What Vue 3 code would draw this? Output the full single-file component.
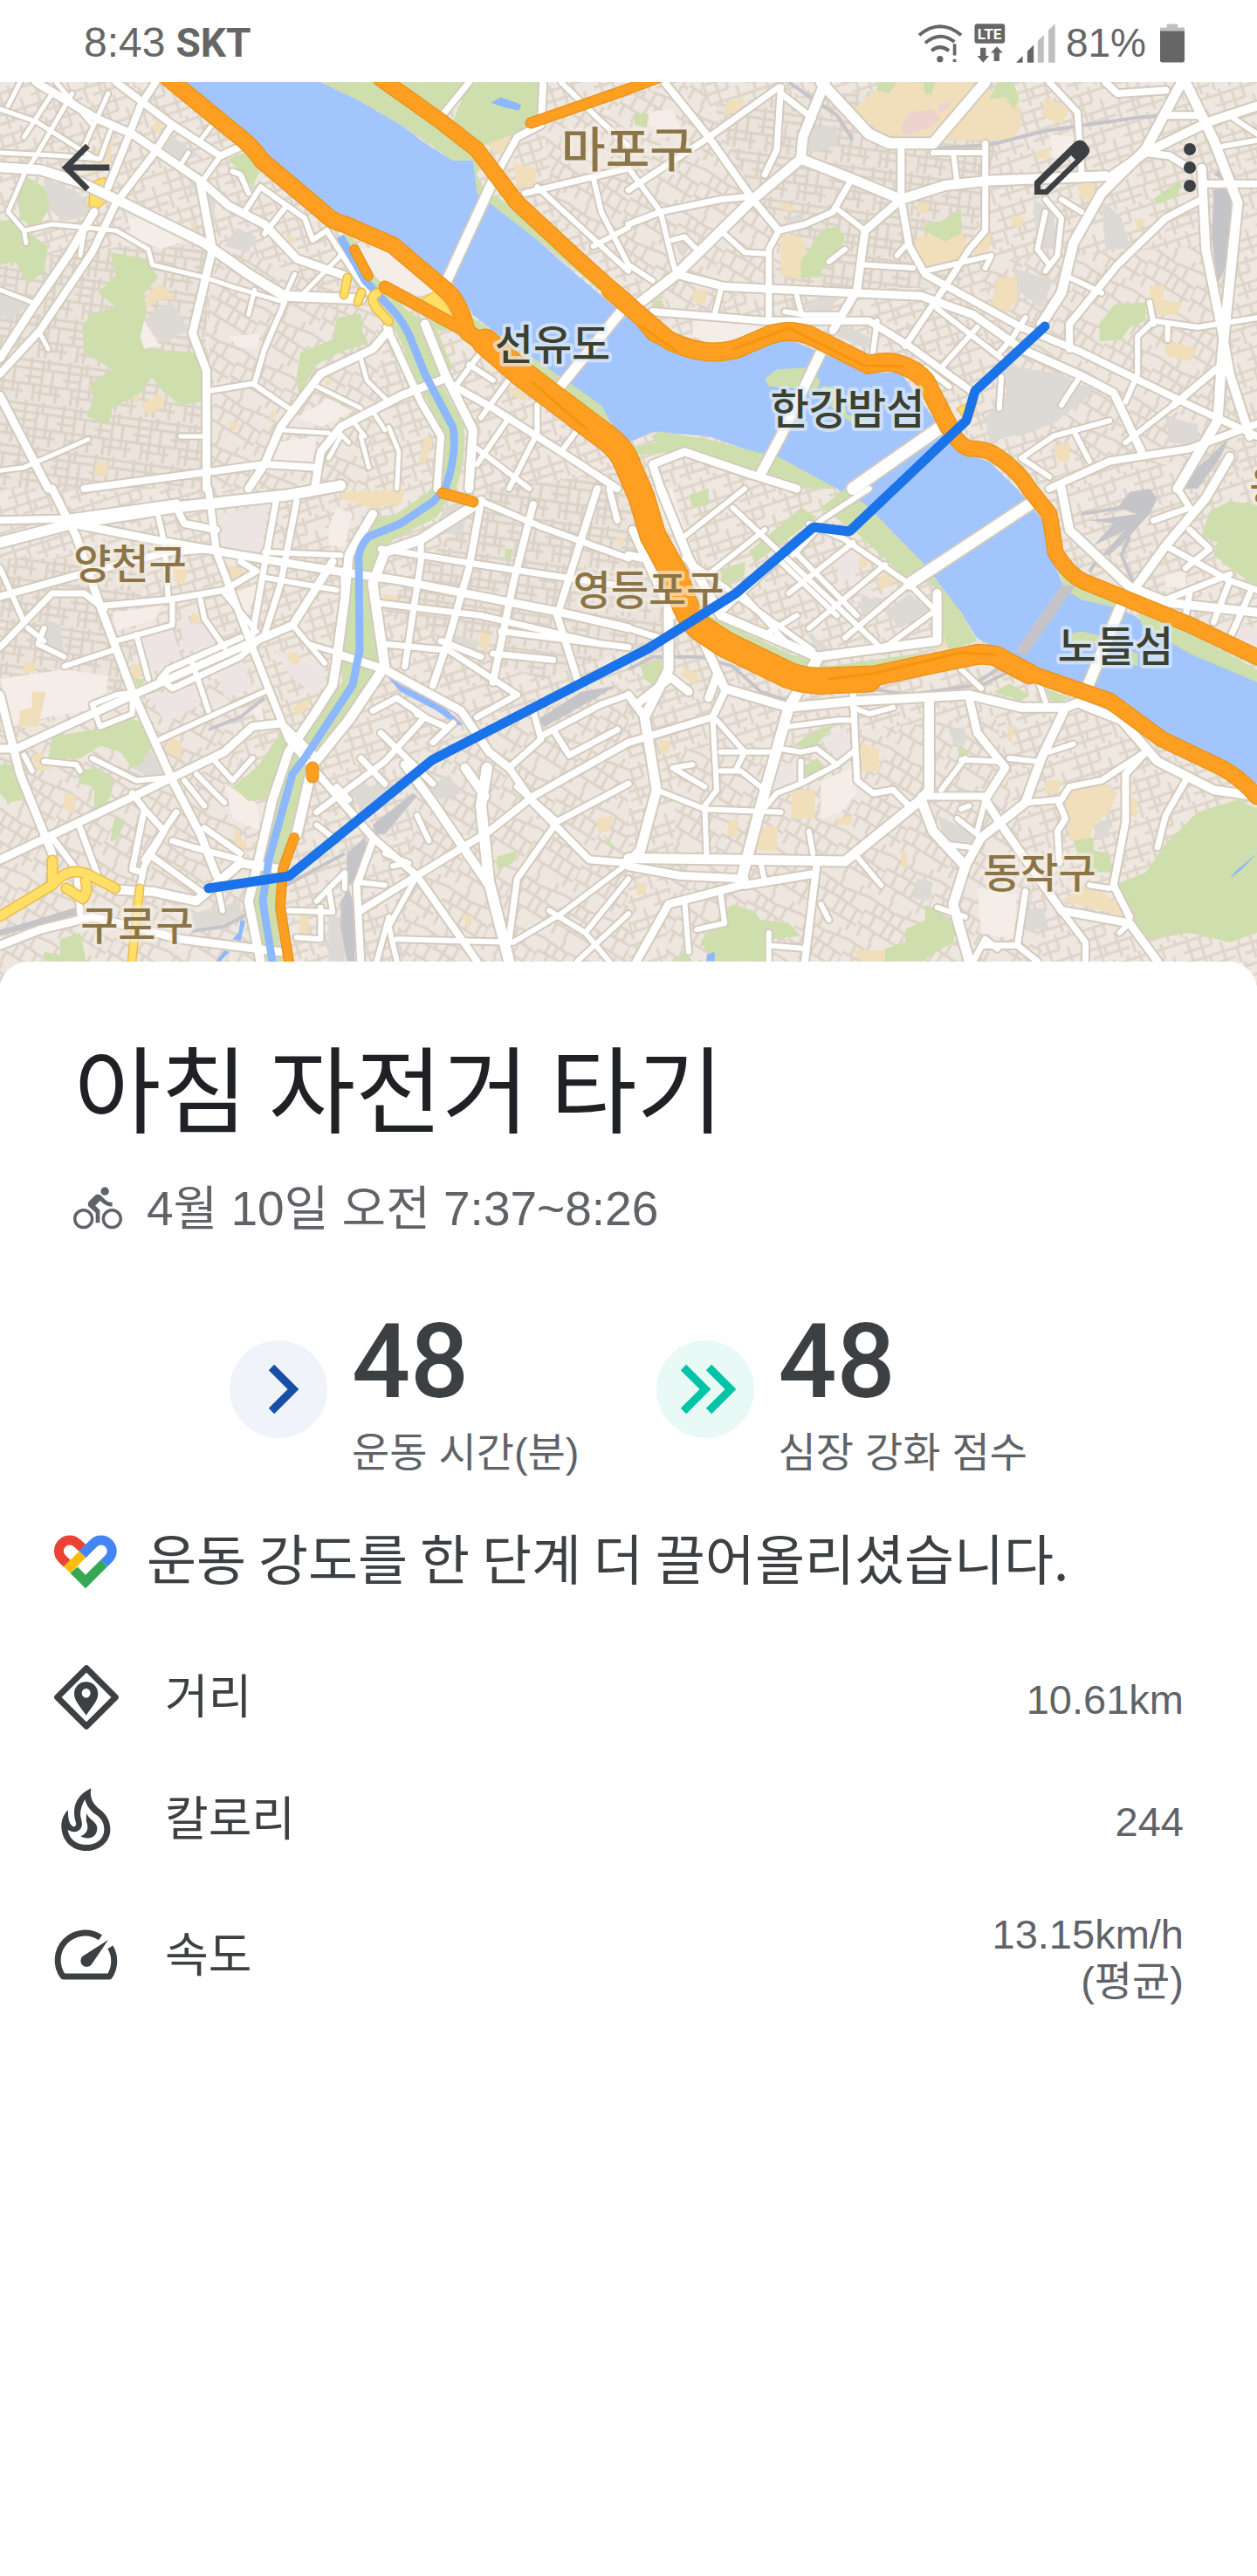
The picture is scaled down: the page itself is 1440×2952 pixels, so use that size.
<script setup>
// Each tile keeps its own 1568-unit grid; road entries are [width in px, path].
const tiles = [
  {
    id: 'nw',
    transform: 'translate(0 0) scale(0.4592 0.3571)',
    grey: [
      'M110 570L200 620L230 690L160 710L110 660Z', 'M0 930L70 980L20 1030L0 1010Z', 'M370 1010L430 970L470 1060L410 1100L360 1060Z',
      'M590 730L640 760L620 810L560 790Z', 'M400 410L500 500L450 520L390 470Z', 'M460 560L540 640L530 720L500 650Z', 'M1370 800L1430 850L1400 900L1350 850Z',
    ],
    sand: [
      'M290 880L340 900L320 940L280 920Z', 'M370 940L400 910L440 960L400 960L360 990Z', 'M240 480L285 440L270 540L220 560Z', 'M710 740L740 770L720 780Z',
      'M470 705L495 720L480 735Z', 'M390 380L410 395L395 430L380 410Z', 'M325 1260L350 1270L340 1300Z', 'M350 1300L400 1260L410 1300L370 1330Z', 'M570 1350L600 1360L580 1390Z',
      'M240 1480L270 1490L265 1530L235 1520Z', 'M1060 1400L1080 1410L1060 1490L1045 1480Z', 'M1270 1240L1320 1260L1310 1290L1270 1260Z', 'M1280 520L1335 540L1340 600L1290 600Z',
      'M810 1215L830 1225L815 1240Z', 'M680 1310L690 1330L670 1360Z', 'M1210 460L1310 400L1290 440L1260 520L1280 600L1240 580L1250 500Z', 'M1040 370L1060 420L1100 440L1050 430L1030 390Z',
    ],
    pale: ['M320 700L460 720L470 770L400 800L330 760Z', 'M350 1010L400 1110L350 1120Z', 'M570 1080L650 1070L640 1120L590 1110Z', 'M880 800L980 790L1100 930L1050 950L940 900Z', 'M740 1340L820 1280L880 1320L800 1370Z', 'M690 1420L790 1400L780 1480L680 1480Z'],
    green: [
      'M70 570L110 600L125 660L90 740L50 700L45 630Z', 'M0 710L50 700L60 740L120 790L110 870L70 910L40 840L0 850Z',
      'M275 810L360 830L395 890L360 940L365 1000L350 1080L360 1120L480 1130L505 1180L500 1290L450 1300L410 1260L380 1210L350 1260L280 1310L270 1365L215 1335L235 1280L225 1230L280 1185L210 1130L205 1050L225 1010L290 985L245 940L290 880Z',
      'M570 510L610 490L650 540L630 600L610 570Z', 'M840 1020L900 1005L905 1070L920 1100L850 1130L790 1170L745 1270L740 1210L750 1130L830 1090Z',
      'M800 264L950 264L1110 380L1210 470L1190 560L1210 610L1250 640L1440 830L1568 970L1568 1010L1420 850L1190 620L1180 515L1130 515L1000 400L900 325Z',
      'M1170 264L1350 264L1350 400L1260 440L1200 470L1130 390Z', 'M960 264L1160 264L1100 370Z', 'M940 940L1060 1030L1180 1020L1310 1130L1500 1300L1530 1370L1480 1350L1150 1060L1090 1060L1130 1180L1100 1220L1020 1080Z',
      'M830 1410L845 1430L830 1450Z',
    ],
    water: ['M1225 330L1250 312L1300 335L1295 355L1260 345Z', 'M840 750L880 790L870 800Z'],
    yellow: ['M225 585L260 570L280 610L270 640L240 675L222 660Z', 'M1050 960L1085 935L1110 970L1140 1035Z'],
    roads: [
      [12, 'M-20 535L100 545L200 585L290 640L510 780L620 880L710 950L900 960'], [9, 'M388 264L350 340L320 440L270 600'], [10, 'M90 264L240 380L330 430L500 580L570 660L660 720L740 830L860 885'],
      [9, 'M290 264L430 400L550 500L610 465'], [9, 'M430 400L380 500L290 650L230 810L100 1060L0 1200'], [10, 'M235 680L170 820L80 990L0 1150'], [6, 'M0 490L150 500L250 510L275 420'],
      [6, 'M0 350L90 390L200 480L240 510'], [6, 'M180 300L90 500L60 560L20 680L60 740L130 720L290 740L370 800L380 850L510 890L580 920L710 970'],
      [10, 'M500 590L530 800L480 1070L515 1190L515 1568'], [7, 'M710 970L660 1120L635 1230L520 1255M635 1235L720 1310'], [10, 'M970 1060L930 1120L800 1200L700 1370L660 1490L620 1568'],
      [10, 'M0 1270L120 1568'], [6, 'M0 1510L60 1500L220 1410M60 740L65 780M210 740L200 820'], [9, 'M210 1568L430 1530L660 1490L790 1500'], [9, 'M965 1050L1050 1290L1100 1400L1090 1568'],
      [11, 'M1060 1040L1110 1200L1180 1380L1170 1568'], [10, 'M1110 1215L1000 1270L850 1370L800 1450L785 1568'], [9, 'M1120 1230L1230 1310L1400 1450L1540 1568'],
      [7, 'M1200 1130L1130 1250M1280 1200L1200 1340M1170 1170L1230 1220M1270 1340L1190 1490M1190 1440L1320 1568M1400 1450L1440 1380M1340 1300L1340 1390L1270 1568'],
      [12, 'M1230 580L1115 900M1568 970L1385 1260'], [8, 'M1170 264L1110 360'], [9, 'M1230 580L1290 440L1350 400L1355 264'], [8, 'M1310 620L1568 540'],
      [7, 'M1340 600L1568 870M1480 570L1500 680L1568 850M1480 790L1568 730M1400 264L1500 390L1568 470'], [6, 'M790 1240L900 1310M900 1150L915 1220L970 1290M820 1470L850 1400M970 1370L995 1450L990 1568M900 1400L920 1500M700 1380L820 1390M840 1380L870 1420M880 1350L910 1400M930 1320L960 1380'],
      [7, 'M815 740L880 870L920 940'], [7, 'M610 680L650 600L760 700L780 770L815 740M715 660L660 750M620 620L600 560L580 550M550 500L500 590'], [6, 'M635 930L620 1010M735 880L710 950M850 820L750 950M0 930L80 970M100 1070L120 1120M450 1400L515 1400M530 400L500 450M450 530L470 490M140 264L230 400M20 340L50 264M130 300L60 440M270 300L210 470'],
    ],
  },
  {
    id: 'ne',
    transform: 'translate(720 0) scale(0.4592 0.3571)',
    grey: [
      'M1010 640L1060 680L1070 800L1020 800Z', 'M1180 640L1230 700L1250 800L1190 800Z', 'M110 770L150 800L130 820Z', 'M360 740L430 680L440 720Z', 'M960 860L1060 900L1030 990L970 930Z',
      'M930 1170L1080 1200L1160 1260L1060 1360L900 1420L890 1340L950 1260Z', 'M1340 1340L1420 1360L1420 1430L1350 1420Z', 'M480 950L520 960L500 1000L430 990Z', 'M530 1040L600 1080L600 1120L520 1080Z', 'M430 420L520 400L520 470L440 490Z',
    ],
    sand: [
      'M560 350L640 264L860 264L820 360L760 440L640 435Z', 'M890 290L970 290L980 400L960 450L780 450Z', 'M1040 310L1100 350L1080 400L1030 370Z', 'M1010 490L1050 475L1050 510L1020 510Z', 'M720 760L830 740L850 800L830 840L740 870L705 820Z',
      'M380 750L430 760L440 800L430 900L380 880Z', 'M920 890L970 890L970 960L940 1010L905 985Z', 'M1340 1090L1420 1120L1400 1160L1340 1140Z', 'M1300 915L1335 915L1335 960L1300 960Z', 'M380 650L415 660L410 680L380 670Z', 'M720 650L750 650L745 685L720 680Z',
      'M245 330L290 310L280 350L240 370Z', 'M160 930L200 930L190 975L160 970Z', 'M1060 1430L1100 1420L1100 1480L1070 1480Z', 'M890 750L905 750L900 800L870 820L860 800Z', 'M1260 700L1290 710L1270 740Z', 'M955 690L990 700L980 730L955 725Z', 'M1120 590L1165 590L1150 650L1125 630Z', 'M1310 960L1380 970L1370 1010L1310 1010Z',
    ],
    pale: ['M50 360L110 350L130 410L80 420L50 400Z', 'M160 1030L330 1040L310 1080L240 1110L160 1080Z', 'M1050 430L1110 440L1110 500L1060 510Z'],
    green: [
      'M620 264L670 264L650 300L620 290Z', 'M735 264L765 264L755 305L740 300Z', 'M920 264L960 264L975 320L960 350L940 310L900 320Z', 'M740 720L780 710L830 670L830 750L790 775L735 740Z', 'M480 740L520 725L540 760L530 800L480 870L480 890L430 890L430 840L450 800Z',
      'M1210 980L1290 970L1290 1030L1250 1050L1230 1090L1175 1095L1175 1040Z', 'M1340 610L1380 580L1370 630L1320 655L1310 640Z', 'M15 365L50 365L45 410L15 400Z', 'M340 1215L370 1185L440 1180L480 1220L470 1250L350 1240Z', 'M480 1240L530 1240L545 1330L620 1370L560 1360L500 1300Z',
      'M55 1400L80 1385L200 1410L380 1470L520 1568L400 1568L300 1510L130 1450L0 1460L0 1440L70 1420Z', 'M60 960L85 965L85 990L65 990Z', 'M1430 410L1445 405L1460 450L1440 460Z', 'M0 1010L40 1050L100 1110L60 1090Z',
    ],
    pink: ['M700 360L760 350L780 380L750 410L690 435L680 410Z', 'M770 340L805 322L800 345L780 365Z'],
    rail: ['M1460 610L1500 600L1505 720L1485 870L1470 910L1455 760Z', 'M1460 560L1485 530L1480 575Z', 'M1440 1480L1500 1400L1480 1460L1420 1568L1350 1568Z'],
    railLines: ['M770 475L900 465L1040 420L1280 375L1400 370', 'M400 264L520 370L560 450'],
    yellow: ['M820 1310L870 1280L860 1330L835 1340Z'],
    roads: [
      [9, 'M90 264L200 440L310 640L375 740'], [8, 'M375 280L190 450L0 610'], [12, 'M490 264L435 440L430 510L310 640L120 880L0 1000'], [12, 'M430 510L550 570L680 640L790 595L900 580L1190 565'], [13, 'M480 264L600 430L650 460L760 460L890 264'],
      [9, 'M680 460L680 640L700 790L740 880L980 1050L1130 1130L1400 1300L1568 1400'], [8, 'M0 720L80 680L230 640L310 630'], [7, 'M0 540L80 680L110 840L120 880'], [8, 'M380 280L370 480L340 560M380 300L460 380'],
      [8, 'M550 590L510 680L440 720L375 740L350 800L350 1030'], [10, 'M120 880L240 920L560 940L730 950L860 1010L980 1120L1120 1200L1210 1260L1280 1450'], [10, 'M680 640L590 740L570 930L510 1060'], [9, 'M60 1000L340 1030L600 1030L700 1110L850 1250'],
      [8, 'M890 460L890 740L850 800L790 920L690 1110'], [7, 'M740 870L905 820L890 860M590 850L710 860M760 490L890 490M810 490L820 590'], [12, 'M1380 264L1290 480L1180 620L1110 780L1080 940L1030 1040'], [11, 'M1568 340L1450 390L1290 490L1210 560'],
      [12, 'M1390 264L1460 450L1520 650L1500 900L1480 1150L1470 1350L1370 1568'], [11, 'M1430 540L1440 800L1480 1060L1500 1200L1550 1400'], [9, 'M1430 640L1340 700L1220 850L1100 1040L1100 1120'], [8, 'M1050 264L1120 360L1130 550'],
      [7, 'M1100 890L1180 940M1040 640L1080 700L1070 820L1040 870M1040 680L1020 800L1050 850M1080 640L1130 680'], [7, 'M1568 1020L1420 1050L1310 1030L1270 1080L1270 1200L1240 1290M1300 970L1310 1040M1345 1040L1345 1090'],
      [9, 'M1480 1170L1360 1300M1568 1360L1400 1440L1200 1480L1050 1568'], [7, 'M620 1030L610 1130M770 990L940 1160M870 1050L780 1180M980 1120L870 1250M740 1180L800 1240M930 1210L925 1310M990 1020L960 1080L920 1140'], [7, 'M1110 1380L1150 1480M980 1470L1060 1400L1200 1350M980 1470L1050 1530M1120 1220L1080 1300M1360 1300L1240 1420'],
      [12, 'M480 1130L380 1400L330 1520'], [15, 'M780 1370L560 1568'], [10, 'M60 1490L140 1450L300 1520L420 1568M60 1490L80 1568'], [9, 'M1430 590L1568 590M1190 264L1220 300L1340 290M1340 370L1430 370M1290 490L1350 500L1400 540'],
      [7, 'M390 1000L440 1010L520 1010M420 950L430 1000M540 800L500 840M230 930L215 1010M110 770L140 760L170 800M230 740L290 810L350 815M520 670L590 740M1480 470L1568 450M1510 380L1568 430M0 850L60 900M690 790L670 820'],
    ],
  },
  {
    id: 'sw',
    transform: 'translate(0 560) scale(0.4592 0.3635)',
    grey: [
      'M110 410L150 430L160 520L100 500Z', 'M860 910L930 940L960 900L1000 960L900 1020Z', 'M1130 460L1190 480L1190 520L1130 510Z', 'M1060 950L1120 900L1150 960L1100 980Z', 'M1500 340L1540 350L1530 380Z',
      'M370 820L420 900L370 910L330 880Z', 'M820 1350L860 1350L860 1490L820 1490Z', 'M480 1340L600 1300L600 1350L560 1390L480 1390Z', 'M1110 60L1170 50L1150 160L1090 110Z',
    ],
    sand: [
      'M80 640L115 640L95 750L45 750L50 700L80 690Z', 'M420 780L455 800L450 850L415 830Z', 'M160 960L190 965L185 1020L160 1010Z', 'M330 550L360 560L350 600L325 590Z', 'M730 690L770 660L775 680L740 720Z', 'M580 1060L620 1130L590 1140Z',
      'M750 1340L770 1340L770 1410L745 1400Z', 'M1490 1040L1530 1030L1520 1080L1490 1080Z', 'M720 510L750 530L740 560L720 540Z', 'M955 330L990 340L985 370L960 370Z', 'M565 240L610 260L600 280L570 280Z', 'M60 545L90 550L85 580L60 580Z', 'M1150 1340L1180 1350L1170 1390Z', 'M430 250L470 245L460 300L435 290Z',
      'M1200 450L1225 460L1215 520L1195 490Z', 'M480 390L500 400L495 430L475 420Z', 'M850 10L1010 0L1000 50L920 60L850 30Z', 'M80 840L110 830L100 870L140 880L90 890Z', 'M1535 150L1560 160L1550 185Z',
    ],
    pale: ['M0 600L160 570L270 590L260 690L120 720L30 750Z', 'M560 930L640 990L650 1080L580 1040Z', 'M280 390L400 370L390 410L290 450Z', 'M820 120L840 60L880 80L860 180L820 180Z', 'M590 330L640 300L640 340L600 430Z', 'M620 700L650 670L660 740Z'],
    lilac: ['M550 80L670 50L650 200L540 180Z', 'M350 470L430 440L450 530L380 570Z', 'M450 420L510 430L540 480L460 520Z', 'M380 660L470 600L500 680L410 740Z', 'M540 560L600 530L630 630L560 660Z', 'M680 500L750 540L820 580L790 650L730 600Z'],
    green: [
      'M130 780L240 760L310 720L370 740L380 810L350 870L330 880L300 830L250 810L200 850L120 850Z', 'M190 890L240 880L285 920L270 990L235 1010L235 940L200 930Z', 'M0 870L30 870L60 980L20 990L0 960Z', 'M700 770L720 800L680 930L660 980L620 985L580 940L640 880Z',
      'M285 1040L310 1040L290 1110L275 1110Z', 'M150 1420L200 1400L215 1490L110 1490L110 1460L150 1470Z', 'M1240 1160L1290 1140L1280 1180L1240 1200Z', 'M620 480L640 480L635 490L625 488Z', 'M1260 190L1280 190L1275 220L1260 220Z', 'M335 600L360 600L355 625L340 620Z', 'M1505 1090L1535 1130L1520 1130Z',
      'M1090 20L1105 60L1090 90L980 160L930 250L960 550L910 620L780 870L700 1180L630 1180L760 850L870 640L840 540L860 380L880 260L870 200L920 90L1000 80Z', 'M630 1250L700 1230L690 1490L660 1490Z',
    ],
    water: ['M600 1360L612 1365L600 1425L580 1420L595 1400Z', 'M560 1455L572 1460L550 1490L540 1490Z', 'M966 592L1000 620L1100 680L1155 745L1140 745L1090 700L1000 640Z'],
    rail: ['M0 1390L60 1370L190 1320L210 1335L60 1390L0 1410Z', 'M850 1300L870 1260L885 1320L885 1490L865 1490L850 1380Z', 'M865 1150L910 1100L915 1130L890 1230L865 1260Z', 'M930 1060L1030 960L1040 970L960 1090L935 1090Z', 'M1340 730L1450 640L1540 620L1500 650L1360 750Z'],
    railLines: ['M480 1395L560 1380L620 1340', 'M700 1260L860 1150', 'M520 760L600 720L660 660'],
    yellow: [],
    roads: [
      [13, 'M0 170L180 110L430 60L720 20L850 -10'], [9, 'M0 100L160 95L440 45M440 60L460 110L540 130'], [10, 'M180 110L380 160L600 210L840 260L1000 290L1400 390L1568 440'], [10, 'M130 0L190 150L250 370L330 640L430 920L500 1090L540 1220'], [9, 'M520 0L540 200L620 470L720 790L780 880L930 1100L1040 1220L1190 1490'],
      [9, 'M0 340L200 270L420 200L530 190'], [8, 'M250 370L420 350L560 320L640 260L600 230'], [8, 'M0 500L130 330L210 330L260 380'], [10, 'M0 820L40 820L350 640L600 500L730 430L830 230'], [8, 'M690 30L660 240L630 460M740 40L700 300L660 460L600 530L430 630L400 600L420 570L600 470'],
      [7, 'M340 460L370 600M430 350L430 430L290 480M390 60L410 170L420 350M500 350L510 410L560 500M480 550L520 700M350 640L290 650L230 680L250 750L330 710L330 670M400 790L660 640M660 200L850 210M660 280L840 320M730 430L770 490L810 550M770 490L850 520M560 330L640 450'],
      [10, 'M0 650L50 900L130 1150'], [10, 'M0 1170L350 960L560 830L630 750L700 740L790 850'], [8, 'M330 960L360 1010L410 1080L360 1190L350 1250M360 1010L330 1200L355 1210M430 1110L480 1130L600 1170M380 1160L500 1270M510 1070L600 1150M440 1020L360 1170'],
      [10, 'M860 260L860 350L840 520L960 570L1150 700L1220 830L1270 880'], [11, 'M930 80L870 210L860 350L840 540L830 620L790 700L720 830L680 980L640 1200L620 1300L650 1490'], [12, 'M1200 40L1050 160L960 200L930 300L960 560L870 730L780 870L740 1090'],
      [9, 'M1200 40L1170 250L1120 470L1080 620M1330 50L1280 300L1230 610M1490 0L1440 200L1390 400L1440 600'], [8, 'M950 190L1200 240L1568 310M940 360L1200 400L1500 490M960 490L1120 510L1290 650M1250 450L1568 500M1050 160L1050 230L1010 560M1230 520L1380 540M1200 40L1350 120L1568 220M1520 0L1540 100'],
      [8, 'M930 700L990 660L1060 720L960 860L790 1020M950 770L1080 930M1040 710L1110 750M900 850L960 930M840 940L870 980M1130 740L1080 800M1290 650L1190 720M1100 480L1200 530'], [13, 'M1215 880L1200 1000L1220 1240L1270 1490'], [11, 'M1010 870L1080 990L1220 1250M1160 880L1210 970'],
      [9, 'M1568 800L1330 970L1220 1080L1040 1220L900 1330'], [9, 'M1270 880L1330 990L1470 1170L1568 1180'], [8, 'M1330 700L1350 790L1270 880M1350 780L1500 680L1568 650M1380 760L1420 840L1540 760'], [8, 'M1568 930L1390 1050L1290 1230L1270 1420M1390 1050L1290 940'],
      [9, 'M930 1110L890 1250L900 1490'], [7, 'M890 1240L960 1250M1040 1220L970 1380L990 1490M940 1490L970 1350M1568 1180L1400 1340L1280 1430L990 1420M1370 1330L1460 1400L1568 1230M960 1150L1020 1180L980 1190M1040 1030L1070 1110M790 1060L830 1100M790 1300L860 1210L860 1260M720 1330L830 1335L820 1260M800 1320L800 1420L740 1415M1568 1340L1440 1490M1460 1400L1520 1490'],
      [11, 'M290 1265L380 1270L490 1300L600 1180L700 1200'], [10, 'M0 1440L100 1390L230 1350L450 1420L700 1460'], [8, 'M200 1070L250 1240M130 1100L190 1200L200 1340'], [7, 'M110 860L190 870L200 890M230 850L340 920L430 910M530 850L580 920L630 850M460 920L510 1000M490 900L560 990M70 440L110 480M110 440L95 490L160 530M160 560L280 510M60 840L80 890M540 1240L555 1330M0 250L60 420'],
    ],
  },
  {
    id: 'se',
    transform: 'translate(720 560) scale(0.4592 0.3635)',
    grey: ['M580 330L640 350L620 410L580 400Z', 'M640 390L700 330L750 380L680 440Z', 'M770 1030L870 1090L860 1120L790 1110Z', 'M720 1230L760 1240L750 1300L710 1290Z', 'M980 1330L1040 1320L1040 1390L990 1390Z', 'M1170 1050L1200 1040L1200 1100L1160 1100Z', 'M800 760L840 750L840 810L810 800Z', 'M430 440L500 500L480 510Z'],
    sand: [
      'M410 950L465 950L465 1040L405 1040Z', 'M580 800L625 820L625 890L580 895Z', 'M320 1065L372 1065L370 1140L315 1140Z', 'M1090 950L1190 930L1220 960L1200 1020L1160 1060L1150 1110L1100 1110Z', 'M1080 1300L1150 1240L1240 1330L1230 1345Z',
      'M560 1455L640 1455L640 1490L580 1490Z', 'M620 290L650 250L670 290L630 320Z', 'M250 1045L275 1045L270 1100L245 1090Z', 'M520 1040L560 1030L555 1060L520 1060Z', 'M135 560L180 590L165 620L135 590Z', 'M945 750L965 750L955 800L945 790Z', 'M75 790L105 795L100 835L80 830Z', 'M1040 920L1080 920L1070 960L1040 960Z', 'M1250 970L1270 980L1265 1040L1250 1020Z', 'M325 430L345 420L370 460L360 480Z', 'M680 1140L695 1150L695 1200L680 1190Z', 'M580 210L610 215L590 250L575 240Z',
      'M20 1240L45 1245L40 1280L20 1280Z', 'M770 450L790 460L800 500L760 510Z',
    ],
    pale: ['M480 920L560 880L570 960L530 1020L480 1040Z', 'M870 1260L970 1280L960 1420L880 1400Z', 'M30 0L110 0L140 130L80 130Z', 'M1340 270L1390 260L1390 310L1340 310Z'],
    lilac: ['M500 210L560 180L600 220L540 290Z', 'M480 790L540 750L560 830L520 850Z', 'M370 860L420 870L420 930L370 940Z', 'M560 320L600 300L610 350Z', 'M1500 410L1568 440L1568 520L1500 480Z'],
    green: [
      'M540 0L600 60L740 240L830 390L870 480L800 510L780 440L760 300L700 290L560 130L480 60Z', 'M300 200L430 60L470 90L320 230Z', 'M150 20L200 0L200 50L160 60Z', 'M220 260L290 230L290 270L240 310Z', 'M110 210L200 400L400 520L500 560L720 520L720 540L500 575L400 560L220 460L130 290Z',
      'M1030 0L1060 200L1150 310L1230 340L1230 380L1130 350L1090 320L1060 220Z', 'M1450 70L1500 40L1568 50L1568 310L1500 250L1460 210L1470 170L1430 150Z', 'M910 640L950 615L1000 650L980 670Z', 'M1040 630L1100 660L1060 680Z', 'M1270 380L1360 430L1568 570L1568 610L1400 520L1280 430Z',
      'M1420 1020L1520 980L1568 1010L1568 1400L1500 1430L1400 1400L1300 1420L1220 1300L1210 1250L1290 1210L1340 1120Z', 'M230 1340L260 1310L310 1330L330 1360L400 1370L430 1410L360 1420L340 1490L215 1490L180 1430Z', 'M740 1310L790 1350L820 1390L810 1430L730 1490L640 1490L640 1450L690 1430L690 1390L740 1360Z',
      'M1110 1110L1160 1100L1160 1140L1200 1150L1210 1210L1150 1210L1120 1150Z', 'M430 880L470 850L500 890L460 920L430 920Z', 'M410 810L470 760L510 750L460 820Z', 'M30 560L80 540L90 580L60 620L40 600Z', 'M820 820L850 825L840 850L825 845Z', 'M1090 460L1130 450L1200 470L1160 490L1100 480Z', 'M1230 500L1270 520L1270 560L1230 540Z', 'M110 1490L140 1460L160 1490Z', 'M970 840L1010 850L990 860Z',
    ],
    water: ['M195 1470L215 1460L215 1490L195 1490Z', 'M1568 1150L1530 1200L1500 1230L1515 1205Z'],
    rail: ['M1080 310L1120 310L990 525L965 510Z', 'M1150 100L1270 80L1220 60L1250 10L1300 0L1320 30L1300 80L1250 150L1200 210L1180 210L1240 130L1160 180L1210 110Z'],
    railLines: ['M0 570L60 530L180 530L260 560L330 640L400 670', 'M600 630L700 650L860 620L930 560', 'M1180 210L1150 260', 'M1250 150L1230 210L1260 300', 'M880 620L960 570', 'M1130 80L1230 60'],
    yellow: [],
    roads: [
      [11, 'M80 0L150 220L230 400L470 530L770 480L770 330'], [8, 'M0 440L100 480'], [12, 'M100 380L100 570L40 720L70 950L30 1140L0 1180'], [11, 'M190 490L240 630L400 690L560 670L850 650L980 690L1090 690L1130 670'], [9, 'M240 640L210 720L0 800'],
      [13, 'M470 540L400 690L330 1000L280 1240'], [12, 'M750 670L750 950L730 980L760 1080L840 1190L810 1310L850 1490'], [8, 'M560 640L570 920L610 960L660 950L700 1000'], [10, 'M850 660L870 770L940 880L890 980L930 1060L1080 1330L1250 1370L1320 1490'],
      [11, 'M1090 690L1030 850L990 990L880 1100L840 1190'], [12, 'M730 980L540 1175L290 1170L0 1165'], [9, 'M730 970L890 970'], [8, 'M990 990L1080 980L1100 940L1180 920L1290 830'], [11, 'M1130 680L1230 730L1320 860L1460 950L1568 970'],
      [9, 'M1290 830L1240 900L1240 1050L1210 1250L1250 1350'], [8, 'M1390 920L1340 1030L1320 1130'], [8, 'M1070 980L1090 1040L1070 1080L1075 1180'], [10, 'M0 1190L130 1220L290 1230M290 1250L460 1215M280 1250L100 1310L20 1490'], [9, 'M470 1180L440 1490'],
      [7, 'M210 720L220 950L190 1000L195 1160M230 830L360 830M70 950L190 1010L380 1020M380 820L430 830L470 820L520 870L560 830M430 860L430 930L520 870M430 930L370 960L330 1020M220 730L290 830L270 880M230 890L280 890L330 940M190 940L110 880L160 870'],
      [7, 'M570 1160L630 1250M770 1320L840 1350M840 850L780 950M830 855L920 860M780 1120L850 1130M820 1040L880 1100M400 750L520 730L560 730M560 690L600 710L660 690M950 850L1020 860M1050 830L1110 805M890 980L870 1080M850 1000L830 1010M450 1080L460 1150M330 1180L340 1240'],
      [8, 'M1080 1330L1140 1430L1140 1490M990 1270L970 1440L1020 1490M890 1440L970 1440M860 1490L890 1420L920 1450'], [14, 'M1000 50L700 300'], [13, 'M1235 350L1140 640'], [10, 'M10 130L50 240L110 400M0 210L40 220M0 650L40 720M100 590L150 640M220 590L200 660M20 680L100 600'],
      [7, 'M140 150L290 0M140 220L460 510M200 270L340 130M260 60L620 490M450 110L540 160L700 300L770 390M560 170L400 330M640 240L450 440M700 300L540 470M770 380L640 500M400 180L570 400M240 380L480 100L600 0M290 340L390 480M380 230L520 400M340 460L420 400M430 150L360 230M470 130L410 210'],
      [11, 'M1080 0L1100 130L1250 310L1350 360L1568 390'], [11, 'M1500 -100L1440 30L1340 180L1260 320'], [8, 'M1340 180L1500 290L1568 320M1390 250L1450 190L1400 130M1500 270L1340 350M1400 330L1390 400M1500 290L1460 420M1550 330L1490 500M1370 0L1400 60L1310 100'], [7, 'M830 570L880 630M1020 600L1040 670M140 1300L150 1460M230 1280L240 1370L170 1390M350 1400L350 1490M350 1440L440 1450M480 1310L500 1360M1150 1250L1200 1260M1250 1370L1225 1400'],
    ],
  },
]

const river =
  'M205 94L367 94L409 114L459 143L487 164L519 184L544 184L546 211L565 229L643 300L707 354L766 396L826 411L867 393L904 389L995 427L1032 427L1069 479L1110 521L1133 529L1165 560L1198 600L1207 644L1220 676L1285 698L1363 742L1440 776V898L1400 873L1331 840L1271 796L1179 764L1119 731L1101 702L1041 644L995 582L977 575L959 560L894 529L812 500L748 495L720 507L680 464L638 432L597 404L542 361L523 329L455 279L381 250L275 146Z'
const stream =
  'M390 271L418 321L441 346Q458 362 468 382L487 429L519 490Q524 520 510 560L496 575L459 600L422 615Q409 630 411 644L412 745L404 785L349 869L335 887L308 985L301 1033L312 1102V1124'

const highways = [
  [20, 'M193 90L270 153Q290 168 300 184L370 243Q380 254 395 257L450 281L515 336Q528 350 535 380L600 430'],
  [31, 'M556 392L600 430L645 464L690 498Q712 512 720 535L735 570L748 614L775 662Q784 704 803 720L830 738L904 774Q926 782 950 780L995 778'],
  [24, 'M950 778L995 776L1060 762L1119 750Q1142 749 1150 757L1179 772'],
  [19, 'M1130 749L1179 771L1271 803L1331 847L1400 880Q1422 892 1440 913'],
  [15, 'M441 329L551 389L590 420'],
  [19, 'M436 90L505 139L546 171L592 232L661 296L698 329L720 348'],
  [15, 'M700 330L720 350L748 384L780 399'],
  [22, 'M700 333L766 390Q800 406 826 403Q842 402 853 396L881 384Q904 376 927 384L995 418Q1018 412 1032 418Q1050 424 1060 436L1087 489'],
  [19, 'M1055 430L1087 489Q1098 510 1110 514Q1128 514 1138 520Q1166 538 1179 560L1202 589Q1206 610 1209 633Q1226 662 1248 669L1285 684L1363 716L1440 753'],
  [13, 'M608 141L720 102L757 88'],
  [12, 'M406 286L422 316'],
  [13, 'M507 565L542 575'],
  [12, 'M337 960L324 996L321 1040L331 1102V1124'],
  [15, 'M358 880V890'],
]
const laneLines = ['M610 438L672 492', 'M950 778L1000 772L1100 748L1140 750', 'M840 400L904 376L990 419L1035 420', 'M735 374L775 402']
const ramps = [
  [9, 'M398 318L394 338'], [9, 'M414 335L410 346'], [10, 'M432 336Q422 340 432 354L445 368'],
  [11, 'M0 1050L60 1014V986M60 1014Q80 990 105 1004L132 1018M76 1018L95 1030Q102 1020 98 1010'], [9, 'M160 1018L151 1102V1124'],
]
const route = 'M239 1018L331 1004L495 871L743 743L843 680L932 604L973 609L1107 482L1117 448L1197 374'

const places = [
  { name: '마포구', x: 719, y: 191, size: 55, kind: 'district' },
  { name: '양천구', x: 149, y: 663, size: 47, kind: 'district' },
  { name: '영등포구', x: 743, y: 693, size: 47, kind: 'district' },
  { name: '동작구', x: 1191, y: 1017, size: 47, kind: 'district' },
  { name: '구로구', x: 157, y: 1077, size: 47, kind: 'district' },
  { name: '용산구', x: 1496, y: 574, size: 47, kind: 'district' },
  { name: '선유도', x: 633, y: 412, size: 48, kind: 'island' },
  { name: '한강밤섬', x: 971, y: 486, size: 48, kind: 'island' },
  { name: '노들섬', x: 1278, y: 758, size: 48, kind: 'island' },
]
</script>

<template>
  <div class="screen">
    <header class="status">
      <div class="status-left">
        <time>8:43</time>
        <span class="carrier">SKT</span>
      </div>
      <div class="status-right">
        <svg class="wifi" viewBox="88 70 160 140" aria-hidden="true">
          <g fill="none" stroke="#666" stroke-width="12">
            <path d="M94 112Q166 52 239 112" />
            <path d="M115 139Q166 96 216 135" />
            <path d="M137 166Q166 142 197 166" />
          </g>
          <circle cx="166" cy="195" r="11" fill="#666" />
          <path d="M211 142h11v40h-11zM211 195h11v10h-11z" fill="#666" />
        </svg>
        <svg class="lte" viewBox="281 71 108 136" aria-hidden="true">
          <rect x="282" y="72" width="105" height="68" rx="10" fill="#666" />
          <text x="334" y="126" text-anchor="middle" class="lte-text">LTE</text>
          <path d="M302 155h19v28h11l-20 23-21-23h11zM349 201h19v-29h12l-21-22-21 22h11z" fill="#666" />
        </svg>
        <svg class="signal" viewBox="423 72 136 136" aria-hidden="true">
          <path d="M423 207L446 184V207ZM462 168L484 146V207H462Z" fill="#666" />
          <path d="M498 132L519 111V207H498ZM535 95L558 73V207H535Z" fill="#bfbfbf" />
        </svg>
        <span>81%</span>
        <svg class="battery" viewBox="927 74 84 134" aria-hidden="true">
          <path d="M950 75h37v12h24v13h-84V87h23z" fill="#bfbfbf" />
          <path d="M927 99h84v101q0 7-7 7h-70q-7 0-7-7z" fill="#666" />
        </svg>
      </div>
    </header>

    <section class="map" aria-label="운동 경로 지도">
      <svg class="map-canvas" viewBox="0 94 1440 1036" preserveAspectRatio="xMidYMin slice">
        <defs>
          <pattern id="blocks-a" width="56" height="48" patternUnits="userSpaceOnUse" patternTransform="rotate(-18)">
            <rect width="56" height="48" fill="#efe8e1" />
            <path d="M0 6H56M0 18H34M0 30H56M12 40H56M8 0V30M22 6V48M34 0V18M44 18V48M28 30V40M50 0V6M4 30V48" stroke="#ddd5ca" stroke-width="3" fill="none" />
          </pattern>
          <pattern id="blocks-b" width="62" height="54" patternUnits="userSpaceOnUse" patternTransform="rotate(28)">
            <rect width="62" height="54" fill="#eee7e0" />
            <path d="M0 8L30 12L62 8M0 24H26L62 28M0 24V40L62 44M10 8V24M20 10V24M32 12L30 42M44 10V27M54 26V54M14 24V42M40 27V44M22 42V54M6 40V54M48 0V10M24 0V10" stroke="#dcd4c9" stroke-width="3" fill="none" />
          </pattern>
          <pattern id="blocks-c" width="44" height="50" patternUnits="userSpaceOnUse" patternTransform="rotate(8)">
            <rect width="44" height="50" fill="#ebe4dc" />
            <path d="M0 4H44M0 13H44M0 22H20M0 31H44M14 40H44M6 0V31M20 4V50M32 13V40M38 31V50M26 0V13M12 31V50" stroke="#dad2c7" stroke-width="3" fill="none" />
          </pattern>
        </defs>

        <rect y="94" width="1440" height="1036" fill="url(#blocks-a)" />
        <path d="M0 300L240 270L230 560L0 560ZM560 560L720 540L780 720L620 780L440 700ZM820 120L1160 90L1100 330L860 330ZM0 640H170L140 800L0 820Z" fill="url(#blocks-c)" />
        <path d="M240 270L440 360L420 560L240 560ZM620 130L800 94L900 300L800 370L640 250ZM780 860L1140 820L1200 1124H760ZM480 860L720 780V1124H460ZM1120 300L1400 280L1420 540L1200 520ZM0 840L260 780L300 1124H0Z" fill="url(#blocks-b)" />

        <g v-for="t in tiles" :key="'land-' + t.id" :transform="t.transform">
          <path v-for="d in t.grey" :key="d" :d="d" fill="#dddad5" />
          <path v-for="d in t.pale" :key="d" :d="d" fill="#f5eee8" />
          <path v-for="d in t.lilac" :key="d" :d="d" fill="#ece5e4" />
          <path v-for="d in t.sand" :key="d" :d="d" fill="#f0dfba" />
          <path v-for="d in t.pink" :key="d" :d="d" fill="#eed2ce" />
          <path v-for="d in t.rail" :key="d" :d="d" fill="#c5c4c8" />
          <path v-for="d in t.railLines" :key="d" :d="d" class="rail-line" />
        </g>

        <path :d="river" fill="#a3c5fe" />
        <g v-for="t in tiles" :key="'park-' + t.id" :transform="t.transform">
          <path v-for="d in t.green" :key="d" :d="d" fill="#cedeac" />
          <path v-for="d in t.water" :key="d" :d="d" fill="#8db7ff" />
          <path v-for="d in t.yellow" :key="d" :d="d" fill="#ffdf66" stroke="#f5b83c" stroke-width="3" />
        </g>
        <path d="M1216 671L1232 671L1175 752L1163 746Z" fill="#c5c4c8" />
        <path :d="stream" fill="none" stroke="#cedeac" stroke-width="24" />

        <g v-for="t in tiles" :key="'casing-' + t.id" :transform="t.transform">
          <path v-for="([w, d]) in t.roads" :key="d" :d="d" class="road" stroke="#d3cabe" :stroke-width="w + 3" />
        </g>
        <g v-for="t in tiles" :key="'road-' + t.id" :transform="t.transform">
          <path v-for="([w, d]) in t.roads" :key="d" :d="d" class="road" stroke="#fff" :stroke-width="w - 1" />
        </g>
        <path :d="stream" fill="none" stroke="#8db7ff" stroke-width="9" />

        <g class="line">
          <path v-for="([w, d]) in ramps" :key="'rc' + d" :d="d" stroke="#efb94a" :stroke-width="w + 2" />
          <path v-for="([w, d]) in ramps" :key="d" :d="d" stroke="#ffdf66" :stroke-width="w - 1" />
          <path v-for="([w, d]) in highways" :key="'hc' + d" :d="d" stroke="#e8951d" :stroke-width="w" />
          <path v-for="([w, d]) in highways" :key="d" :d="d" stroke="#ff9f22" :stroke-width="w - 3" />
          <path v-for="d in laneLines" :key="d" :d="d" stroke="#f2960c" stroke-width="3" />
        </g>

        <text v-for="p in places" :key="p.name" :x="p.x" :y="p.y" :font-size="p.size" class="place" :class="p.kind">{{ p.name }}</text>
        <path :d="route" fill="none" stroke="#1a73e8" stroke-width="11" stroke-linejoin="bevel" stroke-linecap="round" />
      </svg>

      <nav class="toolbar">
        <button type="button" aria-label="뒤로">
          <svg class="glyph" viewBox="0 0 24 24"><path d="M20 11H7.83l5.59-5.59L12 4l-8 8 8 8 1.41-1.41L7.83 13H20v-2z" /></svg>
        </button>
        <div class="toolbar-end">
          <button type="button" aria-label="수정">
            <svg class="glyph" viewBox="-9 -9 82 82"><path fill-rule="evenodd" d="M0 63V48L46 3Q52-2 58 3L61 7Q66 13 60 19L15 63ZM7 57H12L47 23L42 18L7 52Z" /></svg>
          </button>
          <button type="button" aria-label="옵션 더보기">
            <svg class="glyph" viewBox="0 0 82 82"><circle cx="41" cy="20" r="7" /><circle cx="41" cy="41" r="7" /><circle cx="41" cy="62" r="7" /></svg>
          </button>
        </div>
      </nav>
    </section>

    <main class="sheet">
      <h1>아침 자전거 타기</h1>
      <p class="when">
        <svg class="bike" viewBox="0 0 24 24" aria-hidden="true">
          <path d="M15.5 5.5c1.1 0 2-.9 2-2s-.9-2-2-2-2 .9-2 2 .9 2 2 2zM5 12c-2.8 0-5 2.2-5 5s2.2 5 5 5 5-2.2 5-5-2.2-5-5-5zm0 8.5c-1.9 0-3.5-1.6-3.5-3.5s1.6-3.5 3.5-3.5 3.5 1.6 3.5 3.5-1.6 3.5-3.5 3.5zm5.8-10l2.4-2.4.8.8c1.3 1.3 3 2.1 5.1 2.1V9c-1.5 0-2.7-.6-3.6-1.5l-1.9-1.9c-.5-.4-1-.6-1.6-.6s-1.1.2-1.4.6L7.800 8.400c-.4.4-.6.9-.6 1.400 0 .6.2 1.100.6 1.400L11 14v5h2v-6.200l-2.200-2.300zM19 12c-2.800 0-5 2.200-5 5s2.200 5 5 5 5-2.200 5-5-2.200-5-5-5zm0 8.500c-1.900 0-3.500-1.600-3.500-3.500s1.600-3.500 3.500-3.500 3.500 1.600 3.500 3.500-1.600 3.500-3.500 3.500z" />
        </svg>
        4월 10일 오전 7:37~8:26
      </p>

      <div class="stats">
        <div class="stat">
          <svg class="badge" viewBox="0 0 112 112" aria-hidden="true">
            <circle cx="56" cy="56" r="56" fill="#f0f3f9" />
            <path d="M48 31L73 56L48 81" fill="none" stroke="#174ea6" stroke-width="9" />
          </svg>
          <div>
            <strong>48</strong>
            <span>운동 시간(분)</span>
          </div>
        </div>
        <div class="stat">
          <svg class="badge" viewBox="0 0 112 112" aria-hidden="true">
            <circle cx="56" cy="56" r="56" fill="#e8f9f6" />
            <path d="M31 31L56 56L31 81M60 31L85 56L60 81" fill="none" stroke="#00c4a7" stroke-width="9" />
          </svg>
          <div>
            <strong>48</strong>
            <span>심장 강화 점수</span>
          </div>
        </div>
      </div>

      <p class="praise">
        <svg class="heart" viewBox="38 38 210 180" aria-hidden="true">
          <g fill="none" stroke-width="32">
            <path d="M81 133L64.500 116.500A36 36 0 1 1 115.500 65.500L133 81" stroke="#ea4335" />
            <path d="M132.500 103L169.500 65.500A36 36 0 1 1 220.500 116.500L205 132" stroke="#4285f4" />
          </g>
          <path d="M92 165L116 144L143 171L194 121L216 143L143 216Z" fill="#34a853" />
          <path d="M70 143L122 92L143 114L92 165Z" fill="#fbbc04" />
        </svg>
        운동 강도를 한 단계 더 끌어올리셨습니다.
      </p>

      <dl class="metrics">
        <div class="metric">
          <svg class="icon" viewBox="180 141 228 228" aria-hidden="true">
            <path d="M294 155L394 255L294 355L194 255Z" fill="none" stroke="#3c4043" stroke-width="21" stroke-linejoin="round" />
            <path fill="#3c4043" fill-rule="evenodd" d="M293 202C270 202 252 220 252 243C252 265 270 285 293 317C316 285 334 265 334 243C334 220 316 202 293 202ZM293 225A15 16 0 1 1 293 257A15 16 0 1 1 293 225Z" />
          </svg>
          <dt>거리</dt>
          <dd>10.61km</dd>
        </div>
        <div class="metric">
          <svg class="icon" viewBox="182 563 228 228" aria-hidden="true">
            <g fill="#3c4043">
              <path fill-rule="evenodd" d="M312 570C306 602 318 625 345 645C370 665 378 690 378 712C378 755 340 785 296 785C245 785 210 748 210 700C210 680 218 658 233 645C232 670 236 692 248 700C258 706 262 695 260 688C245 640 258 595 312 570ZM291 608C278 630 272 655 277 672C280 685 283 695 279 703C270 722 248 724 232 712C236 745 262 764 297 764C332 764 357 742 357 712C357 690 348 675 332 663C310 648 296 630 291 608Z" />
              <path d="M297 657C305 680 335 685 333 710C331 738 305 750 276 735C300 725 305 705 296 685C295 675 295 665 297 657Z" />
            </g>
          </svg>
          <dt>칼로리</dt>
          <dd>244</dd>
        </div>
        <div class="metric">
          <svg class="icon" viewBox="180 1030 228 228" aria-hidden="true">
            <path d="M342 1082A94 94 0 0 0 214 1216H373A94 94 0 0 0 376 1115" fill="none" stroke="#3c4043" stroke-width="21" stroke-linejoin="round" />
            <path d="M369 1090L312 1174A21 21 0 1 1 280 1147Z" fill="#3c4043" />
          </svg>
          <dt>속도</dt>
          <dd>13.15km/h<br />(평균)</dd>
        </div>
      </dl>
    </main>
  </div>
</template>

<style>
body {
  background: #fff;
}
</style>

<style scoped>
.screen {
  background: #fff;
  color: #3c4043;
  font-family: "Liberation Sans", "Noto Sans CJK KR", sans-serif;
}

.status {
  display: flex;
  justify-content: space-between;
  align-items: center;
  height: 94px;
  padding: 4px 83px 0 96px;
  box-sizing: border-box;
  color: #666;
  font-size: 46px;
  line-height: 48px;
}
.status-left,
.status-right {
  display: flex;
  align-items: center;
  gap: 12px;
}
.status-left time {
  font-size: 48px;
}
.carrier {
  font-family: Roboto, sans-serif;
  font-weight: 700;
}
.wifi { width: 53px; height: 47px; }
.lte { width: 36px; height: 45px; }
.signal { width: 45px; height: 45px; }
.battery { width: 28px; height: 45px; margin-left: 4px; }
.lte-text {
  fill: #fff;
  font: 700 52px Roboto, sans-serif;
}

.map {
  position: relative;
}
.map-canvas {
  display: block;
  width: 100%;
  aspect-ratio: 1440 / 1036;
}
.rail-line {
  fill: none;
  stroke: #c5c4c8;
  stroke-width: 4;
  vector-effect: non-scaling-stroke;
}
.road {
  fill: none;
  stroke-linejoin: round;
  stroke-linecap: round;
  vector-effect: non-scaling-stroke;
}
.line {
  fill: none;
  stroke-linejoin: round;
  stroke-linecap: round;
}
.place {
  font-family: "Noto Sans CJK KR", sans-serif;
  font-weight: 500;
  text-anchor: middle;
  paint-order: stroke;
  stroke-linejoin: round;
  stroke-width: 8px;
}
.district {
  fill: #8b7547;
  stroke: rgba(245, 238, 230, 0.6);
}
.island {
  fill: #3b402f;
  stroke: rgba(225, 235, 245, 0.7);
}

.toolbar {
  position: absolute;
  top: 57px;
  left: 57px;
  right: 36px;
  display: flex;
  justify-content: space-between;
}
.toolbar-end {
  display: flex;
  gap: 64px;
}
.toolbar button {
  display: block;
  padding: 0;
  border: 0;
  background: none;
  cursor: pointer;
}
.glyph {
  display: block;
  width: 82px;
  height: 82px;
  fill: #3c4043;
}

.sheet {
  position: relative;
  margin-top: -28px;
  padding: 77px 84px 0 61px;
  border-radius: 32px 32px 0 0;
  background: #fff;
}
h1 {
  margin: 0 0 42px;
  padding-left: 24px;
  color: #202124;
  font-family: "Noto Sans CJK KR", sans-serif;
  font-size: 108px;
  font-weight: 400;
  line-height: 128px;
}
.when {
  display: flex;
  align-items: center;
  gap: 28px;
  margin: 0;
  padding-left: 23px;
  color: #5f6368;
  font-size: 55px;
  line-height: 72px;
}
.bike {
  width: 56px;
  height: 56px;
  fill: #5f6368;
}

.stats {
  display: flex;
  justify-content: center;
  gap: 88px;
  margin-top: 80px;
  padding-left: 23px;
}
.stat {
  display: flex;
  align-items: flex-start;
  gap: 28px;
}
.badge {
  width: 112px;
  height: 112px;
  margin-top: 35px;
}
.stat strong {
  display: block;
  font-family: Roboto, sans-serif;
  font-size: 118px;
  font-weight: 500;
  line-height: 120px;
}
.stat span {
  display: block;
  margin-top: 14px;
  color: #5f6368;
  font-size: 47px;
  line-height: 60px;
}

.praise {
  display: flex;
  align-items: center;
  gap: 34px;
  margin: 49px 0 0;
  font-family: "Noto Sans CJK KR", sans-serif;
  font-size: 62px;
  line-height: 80px;
}
.heart {
  width: 72px;
  height: 62px;
  margin: 12px 0 0 1px;
}

.metrics {
  margin: 51px 0 0;
}
.metric {
  display: flex;
  align-items: center;
  min-height: 140px;
}
.metric:last-child {
  min-height: 172px;
}
.icon {
  width: 76px;
  height: 76px;
}
dt {
  flex: 1;
  margin-left: 52px;
  padding-bottom: 8px;
  font-family: "Noto Sans CJK KR", sans-serif;
  font-size: 54px;
  line-height: 72px;
}
dd {
  margin: 0;
  padding-top: 6px;
  color: #5f6368;
  font-size: 47px;
  line-height: 54px;
  text-align: right;
}
</style>
